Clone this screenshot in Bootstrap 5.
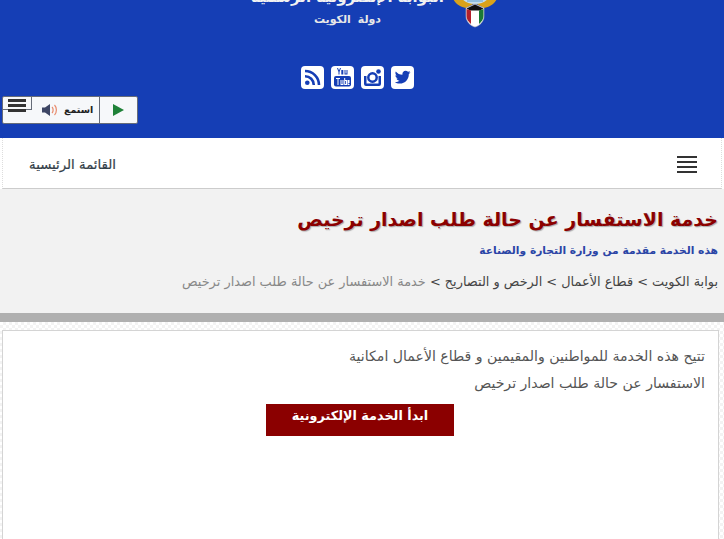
<!DOCTYPE html>
<html lang="ar" dir="rtl">
<head>
  <meta charset="UTF-8" />
  <meta name="viewport" content="width=device-width, initial-scale=1" />
  <title>خدمة الاستفسار عن حالة طلب اصدار ترخيص</title>
  <link href="https://cdn.jsdelivr.net/npm/bootstrap@5.3.0/dist/css/bootstrap.min.css" rel="stylesheet" />
  <style>
    body {
      font-family: "DejaVu Sans", sans-serif;
      background-color: #fff;
      overflow: hidden;
      height: 539px;
    }
    .top-head {
      height: 138px;
      background: #153eb5;
      overflow: hidden;
    }
    .brand-row {
      height: 28px;
      margin-top: -5px;
      margin-right: 226px;
    }
    .brand-title {
      color: #f2f2f2;
      font-size: 15px;
      font-weight: bold;
      line-height: 15px;
      white-space: nowrap;
      margin-top: -5px;
    }
    .brand-sub {
      color: #e8e8e8;
      font-size: 11px;
      font-weight: bold;
      line-height: 15px;
      margin-top: 7px;
      letter-spacing: 1px;
      word-spacing: 3px;
      text-align: center;
    }
    .social-row {
      margin-top: 43px;
      gap: 7px;
      height: 23px;
      padding-right: 9px;
    }
    .social-ico {
      width: 23px;
      height: 23px;
      background: #fff;
      border-radius: 4px;
      display: block;
    }
    .listen-row {
      direction: ltr;
      margin-top: 7px;
      margin-left: 2px;
      position: relative;
    }
    .listen-box {
      width: 136px;
      height: 28px;
      background: #f6f8fa;
      border: 1px solid #666c78;
      border-radius: 2px;
    }
    .play-cell {
      width: 38px;
      border-left: 1px solid #666c78;
    }
    .listen-cell {
      font-size: 9.5px;
      font-weight: bold;
      color: #222;
      gap: 5px;
      padding-left: 39px;
      width: 97px;
    }
    .mini-menu {
      position: absolute;
      left: 0;
      top: 0;
      width: 30px;
      height: 14px;
      border-right: 1px solid #666c78;
      border-bottom: 1px solid #666c78;
      padding: 3px 0 0 6px;
    }
    .mini-menu span {
      display: block;
      width: 18px;
      height: 3px;
      background: #333;
      margin-bottom: 2px;
    }
    .menu-bar {
      height: 51px;
      background: #fff;
      border-bottom: 1px solid #ccc;
      border-left: 1px dotted #ddd;
      border-right: 1px dotted #ddd;
      margin: 0 2px;
      padding: 3px 24px 0 26px;
    }
    .burger {
      width: 20px;
    }
    .burger span {
      display: block;
      height: 2px;
      background: #333;
      margin-bottom: 3px;
    }
    .menu-label {
      font-size: 13.3px;
      color: #333e48;
      -webkit-text-stroke: .2px #333e48;
    }
    .title-band {
      height: 133px;
      background: #f2f2f2;
      border-bottom: 9px solid #b0b0b0;
      padding: 17px 6px 0 0;
    }
    .page-title {
      color: #8b0000;
      font-size: 19px;
      font-weight: bold;
      line-height: 26px;
      margin: 0;
      text-shadow: 1px 1px 1px #aaa;
    }
    .page-by {
      color: #2b45a6;
      font-size: 10.7px;
      font-weight: bold;
      line-height: 16px;
      margin: 11px 0 0;
    }
    .crumbs {
      color: #444;
      font-size: 12.9px;
      line-height: 18px;
      margin-top: 14px;
    }
    .crumbs .here {
      color: #888;
    }
    .content-wrap {
      padding: 8px 5px 0 2px;
      background: repeating-conic-gradient(#f3f3f3 0 25%, #fff 0 50%) 0 0 / 6px 6px;
      height: 217px;
    }
    .content-box {
      height: 100%;
      background: #fff;
      border: 1px solid #d4d4d4;
      border-bottom: 0;
      padding: 12px 13px 0 0;
    }
    .content-text {
      color: #555;
      font-size: 14.1px;
      line-height: 27px;
      margin: 0;
      width: 372px;
    }
    .start-btn {
      display: block;
      width: 188px;
      height: 32px;
      margin: 7px 251px 0 0;
      background: #8b0000;
      color: #fff;
      font-size: 12.8px;
      font-weight: bold;
      line-height: 23px;
      border: 0;
      border-radius: 0;
      padding: 0;
    }
  </style>
</head>
<body>

  <header class="top-head">
    <div class="brand-row d-flex align-items-start">
      <svg width="46" height="33" viewBox="0 0 46 33" class="flex-shrink-0 ms-2">
        <path d="M0 0 H46 C45 7 39 12 32 13 L23 8 L14 13 C7 12 1 7 0 0 Z" fill="#d9a21b" />
        <path d="M8 0 H38 C36 6 30 9 23 9 C16 9 10 6 8 0 Z" fill="#c4deef" />
        <path d="M12 3 h22 M15 6 h16" stroke="#5f9fd0" stroke-width="1" fill="none" />
        <path d="M14 13 L23 9 L32 13 V21 C32 27 27 31 23 32 C19 31 14 27 14 21 Z" fill="#fff" stroke="#b9b9b9" stroke-width=".6" />
        <path d="M14.5 13.5 L23 9.5 L31.5 13.5 L28 15.5 H18 Z" fill="#111" />
        <path d="M14.5 14 L19 15.5 V29 C16.5 27 14.5 24 14.5 21 Z" fill="#b3202c" />
        <path d="M31.5 14 L27 15.5 V29 C29.5 27 31.5 24 31.5 21 Z" fill="#1b7a35" />
      </svg>
      <div>
        <div class="brand-title">البوابة الإلكترونية الرسمية</div>
        <div class="brand-sub">دولة الكويت</div>
      </div>
    </div>

    <div class="social-row d-flex justify-content-center">
      <svg class="social-ico" viewBox="0 0 23 23"><path fill="#153eb5" d="M19.5 6.3c-.6.3-1.2.4-1.9.5.7-.4 1.2-1 1.4-1.8-.6.4-1.3.6-2 .8-.6-.6-1.4-1-2.4-1-1.8 0-3.2 1.5-3.2 3.3 0 .3 0 .5.1.7-2.7-.1-5.1-1.4-6.7-3.4-.3.5-.4 1-.4 1.6 0 1.1.6 2.1 1.4 2.7-.5 0-1-.2-1.4-.4 0 1.6 1.1 2.9 2.5 3.2-.3.1-.5.1-.8.1-.2 0-.4 0-.6-.1.4 1.3 1.6 2.2 3 2.3-1.1.9-2.500 1.400-4 1.400h-.8c1.400.9 3.100 1.400 4.900 1.400 5.900 0 9.200-4.900 9.200-9.200v-.4c.7-.5 1.200-1.100 1.700-1.800z"/></svg>
      <svg class="social-ico" viewBox="0 0 23 23">
        <path fill="#153eb5" d="M3 10h2.500v7.500h12V10H20v8a2 2 0 0 1-2 2H5a2 2 0 0 1-2-2z" />
        <circle cx="11.5" cy="11.5" r="4.200" fill="none" stroke="#153eb5" stroke-width="2.500" />
        <circle cx="17.5" cy="5.500" r="2.300" fill="#153eb5" />
      </svg>
      <svg class="social-ico" viewBox="0 0 23 23">
        <path fill="#153eb5" d="M6 2h1l1 2.500L9 2h1L8.500 6v2.500h-1V6zM10.300 4h2v4.500h-2zM13.500 4h1v3.500h1V4h1v4.500h-3z" />
        <rect x="3" y="10" width="17" height="10.500" rx="2" fill="#153eb5" />
        <path fill="#fff" d="M5 12h4v1H7.500v6h-1v-6H5zM9.500 14h1v4h1v-4h1v5h-3zM13.200 12h1v2h1.800v5h-2.800zm1 3v3h.8v-3zM16.500 14h2v3h-1v1h1v1h-2z" />
      </svg>
      <svg class="social-ico" viewBox="0 0 23 23">
        <circle cx="6.3" cy="16.7" r="2.3" fill="#153eb5" />
        <path fill="none" stroke="#153eb5" stroke-width="2.6" d="M4 10.200a8.800 8.800 0 0 1 8.800 8.800M4 5a14 14 0 0 1 14 14" />
      </svg>
    </div>

    <div class="listen-row">
      <div class="listen-box d-flex">
        <div class="listen-cell d-flex align-items-center">
          <svg width="17" height="14" viewBox="0 0 17 14">
            <path d="M0 4.500h3L8 1v12L3 9.500H0z" fill="#3d4664" />
            <path d="M10 4c1.500 1.500 1.500 4.500 0 6M12.500 2c2.500 2.500 2.500 7.500 0 10" fill="none" stroke="#e88a6a" stroke-width="1.2" />
          </svg>
          <span>استمع</span>
        </div>
        <div class="play-cell d-flex align-items-center justify-content-center">
          <svg width="11" height="12" viewBox="0 0 11 12"><path d="M0 0 L11 6 L0 12 Z" fill="#1f8238" /></svg>
        </div>
      </div>
      <div class="mini-menu"><span></span><span></span><span></span></div>
    </div>
  </header>

  <nav class="menu-bar d-flex align-items-center justify-content-between">
    <div class="burger"><span></span><span></span><span></span><span class="mb-0"></span></div>
    <div class="menu-label">القائمة الرئيسية</div>
  </nav>

  <section class="title-band">
    <h1 class="page-title">خدمة الاستفسار عن حالة طلب اصدار ترخيص</h1>
    <p class="page-by">هذه الخدمة مقدمة من وزارة التجارة والصناعة</p>
    <div class="crumbs">بوابة الكويت &gt; قطاع الأعمال &gt; الرخص و التصاريح &gt; <span class="here">خدمة الاستفسار عن حالة طلب اصدار ترخيص</span></div>
  </section>

  <main class="content-wrap">
    <div class="content-box">
      <p class="content-text">تتيح هذه الخدمة للمواطنين والمقيمين و قطاع الأعمال امكانية الاستفسار عن حالة طلب اصدار ترخيص</p>
      <a href="#" class="btn start-btn">ابدأ الخدمة الإلكترونية</a>
    </div>
  </main>

  <script src="https://cdn.jsdelivr.net/npm/bootstrap@5.3.0/dist/js/bootstrap.bundle.min.js"></script>
</body>
</html>
